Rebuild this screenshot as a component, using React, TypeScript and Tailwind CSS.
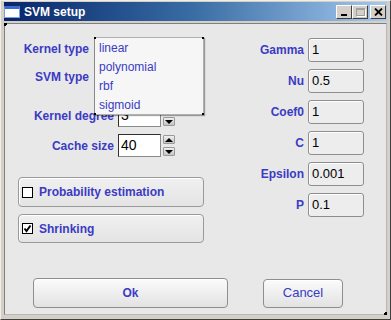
import type { ReactNode } from 'react';

const font = { fontFamily: '"Liberation Sans", Arial, sans-serif' };

const SpinButton = ({ dir }: { dir: 'up' | 'down' }) => (
  <div className="w-[12px] h-[9px] bg-gradient-to-b from-[#f0f0f0] to-[#c4c4c4] border border-[#9a9a9a] rounded-[1px] flex items-center justify-center">
    {dir === 'up' ? (
      <div className="w-0 h-0 border-l-[4px] border-r-[4px] border-b-[4px] border-l-transparent border-r-transparent border-b-black" />
    ) : (
      <div className="w-0 h-0 border-l-[4px] border-r-[4px] border-t-[4px] border-l-transparent border-r-transparent border-t-black" />
    )}
  </div>
);

const SpinField = ({ value }: { value: string }) => (
  <div className="flex items-center gap-[2px]">
    <div className="w-[43px] h-[23px] bg-white border border-t-[#303030] border-l-[#303030] border-r-[#8a8a8a] border-b-[#8a8a8a] flex items-center pl-[2px] text-[14px] text-black">
      {value}
    </div>
    <div className="flex flex-col gap-[3px]">
      <SpinButton dir="up" />
      <SpinButton dir="down" />
    </div>
  </div>
);

const Field = ({ label, value }: { label: string; value: string }) => (
  <div className="flex items-center h-[24px]">
    <div className="w-[64px] text-right font-bold text-[12px] text-[#3b3bc4]">{label}</div>
    <div className="ml-[4px] w-[56px] h-[24px] rounded-[3px] border border-[#8e8e8e] bg-[#ededed] shadow-[inset_1px_1px_0_#ffffff] flex items-center pl-[3px] text-[13px] text-black">
      {value}
    </div>
  </div>
);

const Panel = ({ children, h }: { children: ReactNode; h: string }) => (
  <div
    className={`${h} w-[186px] rounded-[4px] border border-[#9a9a9a] bg-gradient-to-b from-[#f0f0f0] to-[#e4e4e4] shadow-[inset_1px_1px_0_#ffffff] flex items-center pl-[3px] gap-[6px]`}
  >
    {children}
  </div>
);

export default function App() {
  return (
    <div
      style={font}
      className="w-[391px] h-[320px] bg-[#d4d0c8] border border-t-[#f0eee8] border-l-[#f0eee8] border-r-[#404040] border-b-[#404040] pt-[1px] pl-[3px] pr-[3px] select-none"
    >
      {/* title bar */}
      <div className="h-[19px] flex items-center bg-gradient-to-r from-[#0a246a] via-[#3a6ea5] to-[#a6caf0] pl-[0px] pr-[1px]">
        <div className="w-[16px] h-[12px] bg-white border-t-[3px] border-[#3a6ad4] border-x border-b border-x-[#7a9ee0] border-b-[#7a9ee0] ml-[0px]" />
        <span className="ml-[4px] text-white font-bold text-[12px]">SVM setup</span>
        <div className="ml-auto flex items-center">
          <div className="w-[16px] h-[14px] bg-[#d4d0c8] border border-t-white border-l-white border-r-[#404040] border-b-[#404040] flex items-end justify-center pb-[2px]">
            <div className="w-[6px] h-[2px] bg-black" />
          </div>
          <div className="w-[16px] h-[14px] bg-[#d4d0c8] border border-t-white border-l-white border-r-[#404040] border-b-[#404040] flex items-center justify-center">
            <div className="w-[9px] h-[8px] border border-[#a0a0a0] border-t-2 shadow-[1px_1px_0_#ffffff]" />
          </div>
          <div className="ml-[2px] w-[16px] h-[14px] bg-[#d4d0c8] border border-t-white border-l-white border-r-[#404040] border-b-[#404040] flex items-center justify-center">
            <svg width="9" height="8" viewBox="0 0 9 8">
              <path d="M1 0.5 L8 7.5 M8 0.5 L1 7.5" stroke="black" strokeWidth="1.8" />
            </svg>
          </div>
        </div>
      </div>

      {/* client area */}
      <div className="relative mt-[2px] h-[292px] bg-[#e8e8e8] border border-t-[#808080] border-l-[#808080] border-r-[#b8b8b8] border-b-[#b8b8b8] flex flex-col">
        <div className="absolute -left-[1px] -top-[1px] w-[3px] h-[3px] border-l-2 border-t-2 border-black" />
        <div className="absolute -right-[1px] -bottom-[1px] w-[3px] h-[3px] border-r-2 border-b-2 border-black" />

        <div className="flex">
          {/* left column */}
          <div className="ml-[13px] pt-[13px] w-[186px] flex flex-col">
            <div className="flex items-center h-[24px]">
              <div className="w-[71px] text-right font-bold text-[12px] text-[#3b3bc4]">Kernel type</div>
              <div className="relative ml-[4px] w-[111px] h-[24px]">
                <div className="absolute z-10 left-[1px] top-0 w-[110px] h-[78px] bg-[#f6f6f6] border border-[#b0b0b0] border-l-[#8a8a8a] shadow-[1px_1px_1px_rgba(0,0,0,0.35)] flex flex-col pt-[1px] text-[12px] text-[#3b3bc4]">
                  <div className="absolute -left-[1px] -top-[1px] w-[2px] h-[2px] bg-black" />
                  <div className="absolute -right-[1px] -top-[1px] w-[2px] h-[2px] bg-black" />
                  <div className="absolute -left-[1px] -bottom-[1px] w-[2px] h-[2px] bg-black" />
                  <div className="absolute -right-[1px] -bottom-[1px] w-[2px] h-[2px] bg-black" />
                  <div className="h-[19px] pl-[4px] flex items-center">linear</div>
                  <div className="h-[19px] pl-[4px] flex items-center">polynomial</div>
                  <div className="h-[19px] pl-[4px] flex items-center">rbf</div>
                  <div className="h-[19px] pl-[4px] flex items-center">sigmoid</div>
                </div>
              </div>
            </div>
            <div className="mt-[4px] flex items-center h-[24px]">
              <div className="w-[71px] text-right font-bold text-[12px] text-[#3b3bc4]">SVM type</div>
            </div>
            <div className="mt-[15px] flex items-center h-[23px]">
              <div className="w-[96px] text-right font-bold text-[12px] text-[#3b3bc4]">Kernel degree</div>
              <div className="ml-[4px]">
                <SpinField value="3" />
              </div>
            </div>
            <div className="mt-[7px] flex items-center h-[23px]">
              <div className="w-[96px] text-right font-bold text-[12px] text-[#3b3bc4]">Cache size</div>
              <div className="ml-[4px]">
                <SpinField value="40" />
              </div>
            </div>

            <div className="mt-[20px]">
              <Panel h="h-[30px]">
                <div className="w-[11px] h-[11px] bg-white border border-black" />
                <span className="font-bold text-[12px] text-[#3b3bc4]">Probability estimation</span>
              </Panel>
            </div>
            <div className="mt-[7px]">
              <Panel h="h-[29px]">
                <div className="w-[11px] h-[11px] bg-white border border-black flex items-center justify-center">
                  <svg width="9" height="9" viewBox="0 0 9 9">
                    <path d="M1.5 4.5 L3.5 7 L7.5 1.5" stroke="black" strokeWidth="2" fill="none" />
                  </svg>
                </div>
                <span className="font-bold text-[12px] text-[#3b3bc4]">Shrinking</span>
              </Panel>
            </div>
          </div>

          {/* right column */}
          <div className="ml-[36px] pt-[14px] flex flex-col gap-[7px]">
            <Field label="Gamma" value="1" />
            <Field label="Nu" value="0.5" />
            <Field label="Coef0" value="1" />
            <Field label="C" value="1" />
            <Field label="Epsilon" value="0.001" />
            <Field label="P" value="0.1" />
          </div>
        </div>

        {/* buttons */}
        <div className="mt-auto mb-[6px] ml-[28px] flex items-center gap-[35px]">
          <button className="w-[195px] h-[30px] rounded-[4px] border border-[#8e8e8e] bg-gradient-to-b from-[#fbfbfb] to-[#e2e2e2] shadow-[inset_0_1px_0_#ffffff] font-bold text-[12px] text-[#3b3bc4]">
            Ok
          </button>
          <button className="w-[80px] h-[29px] rounded-[4px] border border-[#8e8e8e] bg-gradient-to-b from-[#fbfbfb] to-[#e2e2e2] shadow-[inset_0_1px_0_#ffffff] text-[13px] text-[#3b3bc4]">
            Cancel
          </button>
        </div>
      </div>
    </div>
  );
}
